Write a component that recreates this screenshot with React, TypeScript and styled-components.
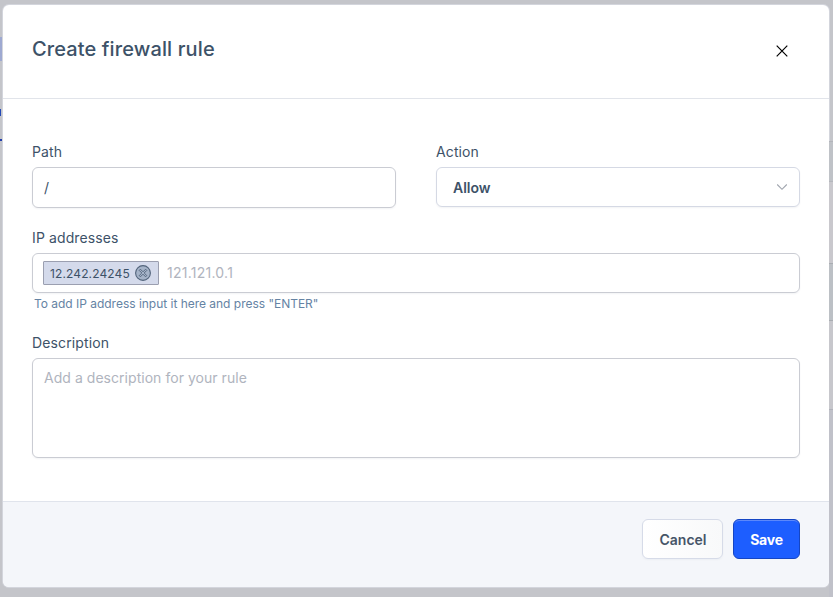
import React from "react";
import styled, { createGlobalStyle } from "styled-components";

const GlobalStyle = createGlobalStyle`
  *, *::before, *::after { box-sizing: border-box; }
  html, body { margin: 0; padding: 0; background: #c4c5ca; }
  body { font-family: Inter, sans-serif; color: #3d5268; overflow: hidden; }
`;

const Page = styled.main`
  display: grid;
  grid-template-columns: 3px 826px 4px;
  width: 833px;
  height: 597px;
  background: #c4c5ca;
`;

const Edge = styled.div`
  display: flex;
  flex-direction: column;
`;

const Strip = styled.div<{ $height: number; $color?: string; $inset?: number }>`
  flex: none;
  height: ${(p) => p.$height}px;
  margin-right: ${(p) => p.$inset ?? 0}px;
  background: ${(p) => p.$color ?? "transparent"};
`;

const Dialog = styled.form`
  display: flex;
  flex-direction: column;
  height: 582px;
  margin-top: 5px;
  border-radius: 6px;
  background: #fff;
  overflow: hidden;
  box-shadow: 0 0 0 1px #d3d5dc;
`;

const Header = styled.header`
  display: flex;
  align-items: flex-start;
  justify-content: space-between;
  height: 94px;
  padding: 30px 37px 0 29px;
  border-bottom: 1px solid #e1e4ea;
`;

const Title = styled.h2`
  margin: 0;
  font-size: 20px;
  line-height: 28px;
  font-weight: 550;
  letter-spacing: 0.12px;
`;

const CloseButton = styled.button`
  display: flex;
  padding: 6px 0 0;
  width: 20px;
  height: 32px;
  justify-content: center;
  align-items: flex-start;
  border: 0;
  background: none;
  color: #000;
`;

const Body = styled.section`
  flex: 1;
  padding: 43px 29px 0;
`;

const Columns = styled.div`
  display: grid;
  grid-template-columns: 364px 364px;
  column-gap: 40px;
  height: 86px;
`;

const Field = styled.div<{ $height?: number }>`
  display: flex;
  flex-direction: column;
  height: ${(p) => (p.$height ? `${p.$height}px` : "auto")};
`;

const Label = styled.label`
  font-size: 14px;
  line-height: 20px;
  height: 25px;
  letter-spacing: 0.12px;
`;

const TextInput = styled.input`
  width: 100%;
  height: 41px;
  padding: 0 11px;
  border: 1px solid #caccd3;
  border-radius: 6px;
  background: #fff;
  box-shadow: 0 1px 2px rgba(30, 45, 80, 0.06);
  font: 14px Inter, sans-serif;
  color: #3d5268;
  outline: none;
`;

const Select = styled.button`
  display: flex;
  align-items: center;
  justify-content: space-between;
  height: 40px;
  padding: 1px 11px 0 16px;
  border: 1px solid #d5d9e4;
  border-radius: 6px;
  background: #fff;
  box-shadow: 0 1px 2px rgba(30, 45, 80, 0.06);
  font: 600 14px/18px Inter, sans-serif;
  color: #3d5268;
  svg { margin-top: -2px; }
`;

const TokenBox = styled.div`
  display: flex;
  align-items: center;
  gap: 8px;
  height: 40px;
  padding: 0 10px;
  border: 1px solid #caccd3;
  border-radius: 6px;
  box-shadow: 0 1px 2px rgba(30, 45, 80, 0.06);
`;

const Token = styled.span`
  display: flex;
  align-items: center;
  justify-content: space-between;
  width: 116px;
  height: 24px;
  padding: 0 7px 0 6px;
  border: 1px solid #9b9fb0;
  border-radius: 1px;
  background: #d4daeb;
  font-size: 12px;
  letter-spacing: 0.12px;
`;

const TokenInput = styled.input`
  flex: 1;
  height: 20px;
  margin-top: -1px;
  padding: 0;
  border: 0;
  outline: 0;
  background: none;
  font: 14px Inter, sans-serif;
  letter-spacing: 0.25px;
  &::placeholder { color: #b0b4be; opacity: 1; }
`;

const Hint = styled.p`
  margin: 3px 0 0 2px;
  font-size: 12px;
  line-height: 16px;
  color: #6583a4;
  letter-spacing: -0.02px;
`;

const TextArea = styled.textarea`
  height: 100px;
  padding: 9px 11px;
  resize: none;
  border: 1px solid #caccd3;
  border-radius: 6px;
  box-shadow: 0 1px 2px rgba(30, 45, 80, 0.06);
  font: 14px/20px Inter, sans-serif;
  letter-spacing: 0.04px;
  outline: none;
  &::placeholder { color: #b0b4be; opacity: 1; }
`;

const Footer = styled.footer`
  display: flex;
  justify-content: flex-end;
  gap: 10px;
  height: 86px;
  padding: 17px 29px 0;
  border-top: 1px solid #e0e4ec;
  background: #f4f6fa;
`;

const Button = styled.button<{ $primary?: boolean }>`
  width: ${(p) => (p.$primary ? 67 : 81)}px;
  height: 40px;
  padding: ${(p) => (p.$primary ? "2px 0 0" : "2px 0 0 1px")};
  border: 1px solid ${(p) => (p.$primary ? "#1546c4" : "#d6dbe8")};
  border-radius: 6px;
  background: ${(p) => (p.$primary ? "#1d5eff" : "linear-gradient(90deg, #fff, #f8f9fa)")};
  box-shadow: ${(p) =>
    p.$primary ? "inset 0 2px 0 -1px #5c88fb" : "0 1px 2px rgba(30, 45, 80, 0.04)"};
  font: ${(p) => (p.$primary ? 700 : 600)} 14px/18px Inter, sans-serif;
  letter-spacing: ${(p) => (p.$primary ? "-0.2px" : "0")};
  color: ${(p) => (p.$primary ? "#fff" : "#465568")};
`;

const CloseIcon = () => (
  <svg width="20" height="20" viewBox="0 0 20 20" fill="none" stroke="currentColor" strokeWidth="1.2">
    <path d="M4.7 4.7 15.3 15.3M15.3 4.7 4.7 15.3" />
  </svg>
);

const ChevronIcon = () => (
  <svg width="12" height="8" viewBox="0 0 12 8" fill="none" stroke="#a0a5ae" strokeWidth="1.1">
    <path d="M1.2 1.5 6 6.3 10.8 1.5" />
  </svg>
);

const RemoveIcon = () => (
  <svg width="16" height="16" viewBox="0 0 16 16" fill="none" stroke="#52647b">
    <circle cx="8" cy="8" r="7.4" fill="#a5b3c8" strokeWidth="1.1" />
    <path
      d="M5.4 4.2 8 6.8l2.6-2.6 1.2 1.2L9.2 8l2.6 2.6-1.2 1.2L8 9.2l-2.6 2.6-1.2-1.2L6.8 8 4.2 5.4Z"
      strokeWidth="0.95"
      strokeLinejoin="round"
    />
  </svg>
);

export default function App() {
  return (
    <>
      <GlobalStyle />
      <Page>
        <Edge>
          <Strip $height={37} />
          <Strip $height={24} $color="#9ea9d1" $inset={1} />
          <Strip $height={48} />
          <Strip $height={7} $color="#2449b5" $inset={2} />
          <Strip $height={23} />
          <Strip $height={2} $color="#233eab" $inset={1} />
        </Edge>
        <Dialog onSubmit={(e) => e.preventDefault()}>
          <Header>
            <Title>Create firewall rule</Title>
            <CloseButton type="button" aria-label="Close">
              <CloseIcon />
            </CloseButton>
          </Header>
          <Body>
            <Columns>
              <Field>
                <Label htmlFor="path">Path</Label>
                <TextInput id="path" defaultValue="/" />
              </Field>
              <Field>
                <Label>Action</Label>
                <Select type="button">
                  Allow
                  <ChevronIcon />
                </Select>
              </Field>
            </Columns>
            <Field $height={105}>
              <Label htmlFor="ip">IP addresses</Label>
              <TokenBox>
                <Token>
                  12.242.24245
                  <RemoveIcon />
                </Token>
                <TokenInput id="ip" placeholder="121.121.0.1" />
              </TokenBox>
              <Hint>To add IP address input it here and press "ENTER"</Hint>
            </Field>
            <Field>
              <Label htmlFor="description">Description</Label>
              <TextArea id="description" placeholder="Add a description for your rule" />
            </Field>
          </Body>
          <Footer>
            <Button type="button">Cancel</Button>
            <Button type="submit" $primary>
              Save
            </Button>
          </Footer>
        </Dialog>
        <Edge>
          <Strip $height={141} />
          <Strip $height={1} $color="#b3b5bb" />
          <Strip $height={39} $color="#bfc2c7" />
          <Strip $height={1} $color="#b5b7bd" />
          <Strip $height={81} $color="#c9c8cd" />
          <Strip $height={1} $color="#a9adb2" />
          <Strip $height={56} $color="#bcc0c5" />
          <Strip $height={1} $color="#a9adb2" />
          <Strip $height={88} $color="#c7c7cc" />
          <Strip $height={1} $color="#b0b2ba" />
          <Strip $height={187} $color="#c0c1c9" />
        </Edge>
      </Page>
    </>
  );
}
